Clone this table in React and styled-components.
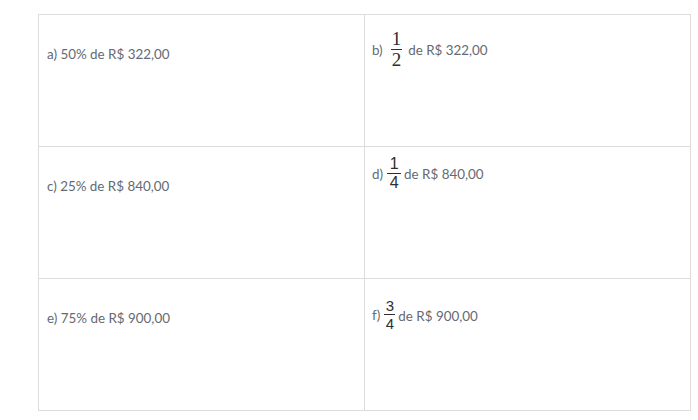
import React from "react"
import styled, { createGlobalStyle } from "styled-components"

const GlobalStyle = createGlobalStyle`
body {
  margin: 0;
  background: #fff;
  font-family: Lato, "Liberation Sans", sans-serif;
}
`

const items = [
  { left: "a) 50% de R$ 322,00", label: "b)", num: "1", den: "2", rest: "de R$ 322,00", kind: "serif", top: 15 },
  { left: "c) 25% de R$ 840,00", label: "d)", num: "1", den: "4", rest: "de R$ 840,00", kind: "sans", top: 9 },
  { left: "e) 75% de R$ 900,00", label: "f)", num: "3", den: "4", rest: "de R$ 900,00", kind: "small", top: 20 },
]

export default function App() {
  return (
    <>
      <GlobalStyle />
      <Page>
        <Grid>
          {items.map((item, index) => (
            <React.Fragment key={index}>
              <Cell>
                <PlainText>{item.left}</PlainText>
              </Cell>
              <Cell $top={item.top}>
                <Line>
                  <Label $kind={item.kind}>{item.label}</Label>
                  <Fraction $kind={item.kind}>
                    <Num $kind={item.kind}>{item.num}</Num>
                    <Den $kind={item.kind}>{item.den}</Den>
                  </Fraction>
                  <Rest $kind={item.kind}>{item.rest}</Rest>
                </Line>
              </Cell>
            </React.Fragment>
          ))}
        </Grid>
      </Page>
    </>
  )
}

const Page = styled.div`
padding: 14px 0 0 38px;
`

const Grid = styled.div`
display: grid;
grid-template-columns: repeat(2, 325px);
grid-auto-rows: 131px;
gap: 1px;
width: fit-content;
background: #dcdcdc;
border: 1px solid #dcdcdc;
`

const Cell = styled.div`
background: #fff;
padding: ${(p) => (p.$top != null ? p.$top : 31)}px 8px 0 7px;
color: #636a72;
font-size: 13.4px;
`

const PlainText = styled.div`
line-height: 16px;
padding-left: 1px;
`

const Line = styled.div`
display: flex;
align-items: center;
line-height: 16px;
`

const Label = styled.span`
margin-right: ${(p) => (p.$kind === "serif" ? 8 : p.$kind === "sans" ? 4 : 4)}px;
`

const Fraction = styled.span`
display: inline-flex;
flex-direction: column;
align-items: center;
color: #2e2e2e;
font-family: ${(p) => (p.$kind === "serif" ? `"Liberation Serif", serif` : `"Liberation Sans", Arial, sans-serif`)};
font-size: ${(p) => (p.$kind === "serif" ? 19 : p.$kind === "sans" ? 16 : 15)}px;
`

const Num = styled.span`
line-height: ${(p) => (p.$kind === "serif" ? 17 : p.$kind === "sans" ? 15 : 13)}px;
padding: 0 1px 2px;
border-bottom: 1px solid #2e2e2e;
min-width: ${(p) => (p.$kind === "sans" ? 12 : 9)}px;
text-align: center;
`

const Den = styled.span`
line-height: ${(p) => (p.$kind === "serif" ? 18 : p.$kind === "sans" ? 16 : 15)}px;
padding-top: 1px;
`

const Rest = styled.span`
margin-left: ${(p) => (p.$kind === "serif" ? 6 : 3)}px;
margin-top: ${(p) => (p.$kind === "serif" ? 0 : 1)}px;
`
